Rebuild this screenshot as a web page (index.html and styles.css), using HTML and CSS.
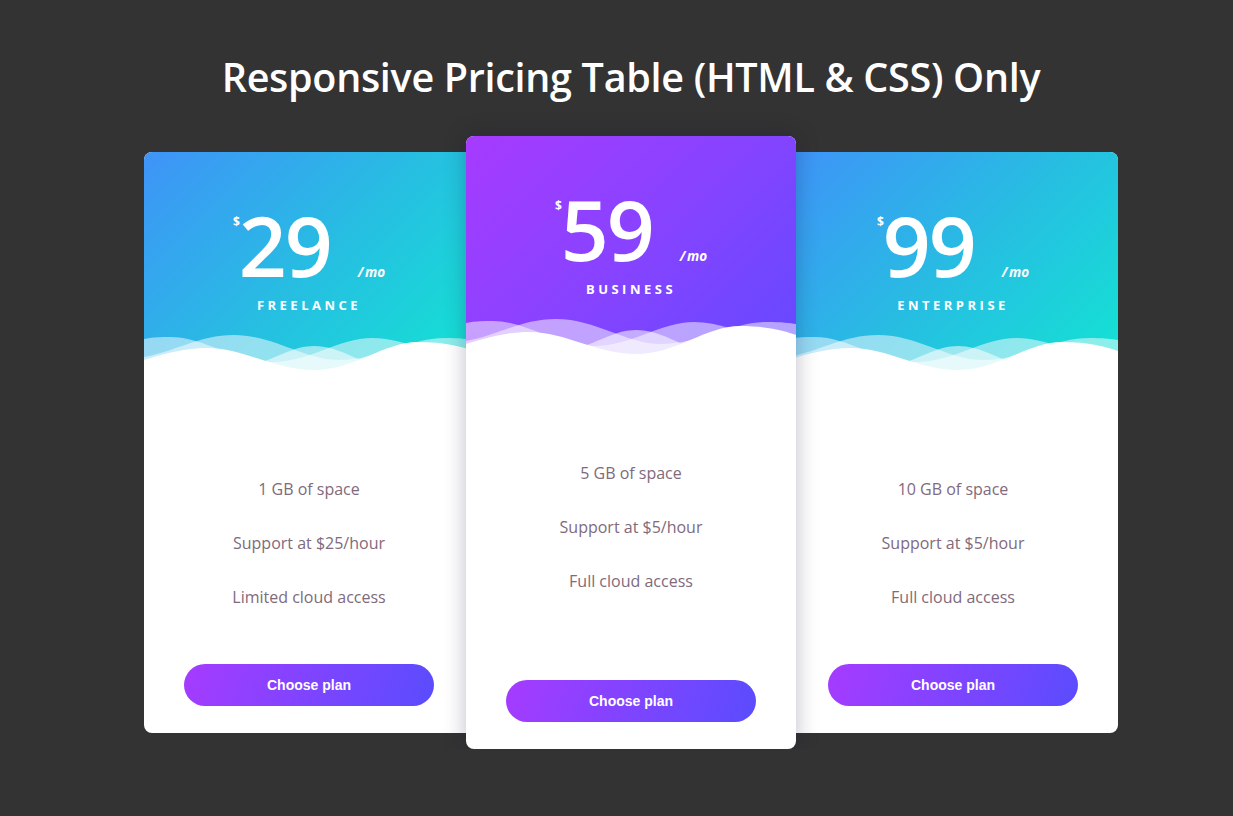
FILE: index.html
```html
<!DOCTYPE html>
<html lang="en">
<head>
<meta charset="utf-8">
<title>Responsive Pricing Table</title>
<link rel="stylesheet" href="styles.css">
</head>
<body>
<main class="page">
  <h1 class="title">Responsive Pricing Table (HTML &amp; CSS) Only</h1>
  <section class="plans">
    <article class="card card--side">
      <header class="card-head">
        <div class="price">
          <span class="currency">$</span>
          <span class="amount">29</span>
          <span class="period">/ mo</span>
        </div>
        <div class="plan-name">FREELANCE</div>
        <svg class="waves" viewBox="0 0 330 55" preserveAspectRatio="none" aria-hidden="true">
          <path fill="#fff" fill-opacity="0.5" d="M0 12 C10 10 18 10 27 10 C60 10 90 35 128 35 C165 35 195 11 228 11 C265 11 300 35 330 35 L330 55 L0 55 Z"/>
          <path fill="#fff" fill-opacity="0.5" d="M0 30 C30 25 55 8 90 8 C130 8 160 33 195 33 C235 33 265 11 301 11 C315 11 325 12 330 13 L330 55 L0 55 Z"/>
          <path fill="#fff" fill-opacity="0.55" d="M0 42 C40 46 80 46 110 38 C135 30 150 19 170 19 C195 19 215 35 240 42 C270 48 300 42 330 38 L330 55 L0 55 Z"/>
          <path fill="#fff" d="M0 33 C20 27 40 21 63 21 C100 21 130 43 170 43 C210 43 240 15 274 15 C300 15 320 20 330 24 L330 55 L0 55 Z"/>
        </svg>
      </header>
      <ul class="features">
        <li>1 GB of space</li>
        <li>Support at $25/hour</li>
        <li>Limited cloud access</li>
      </ul>
      <button class="choose" type="button">Choose plan</button>
    </article>

    <article class="card card--featured">
      <header class="card-head">
        <div class="price">
          <span class="currency">$</span>
          <span class="amount">59</span>
          <span class="period">/ mo</span>
        </div>
        <div class="plan-name">BUSINESS</div>
        <svg class="waves" viewBox="0 0 330 55" preserveAspectRatio="none" aria-hidden="true">
          <path fill="#fff" fill-opacity="0.5" d="M0 12 C10 10 18 10 27 10 C60 10 90 35 128 35 C165 35 195 11 228 11 C265 11 300 35 330 35 L330 55 L0 55 Z"/>
          <path fill="#fff" fill-opacity="0.5" d="M0 30 C30 25 55 8 90 8 C130 8 160 33 195 33 C235 33 265 11 301 11 C315 11 325 12 330 13 L330 55 L0 55 Z"/>
          <path fill="#fff" fill-opacity="0.55" d="M0 42 C40 46 80 46 110 38 C135 30 150 19 170 19 C195 19 215 35 240 42 C270 48 300 42 330 38 L330 55 L0 55 Z"/>
          <path fill="#fff" d="M0 33 C20 27 40 21 63 21 C100 21 130 43 170 43 C210 43 240 15 274 15 C300 15 320 20 330 24 L330 55 L0 55 Z"/>
        </svg>
      </header>
      <ul class="features">
        <li>5 GB of space</li>
        <li>Support at $5/hour</li>
        <li>Full cloud access</li>
      </ul>
      <button class="choose" type="button">Choose plan</button>
    </article>

    <article class="card card--side">
      <header class="card-head">
        <div class="price">
          <span class="currency">$</span>
          <span class="amount">99</span>
          <span class="period">/ mo</span>
        </div>
        <div class="plan-name">ENTERPRISE</div>
        <svg class="waves" viewBox="0 0 330 55" preserveAspectRatio="none" aria-hidden="true">
          <path fill="#fff" fill-opacity="0.5" d="M0 12 C10 10 18 10 27 10 C60 10 90 35 128 35 C165 35 195 11 228 11 C265 11 300 35 330 35 L330 55 L0 55 Z"/>
          <path fill="#fff" fill-opacity="0.5" d="M0 30 C30 25 55 8 90 8 C130 8 160 33 195 33 C235 33 265 11 301 11 C315 11 325 12 330 13 L330 55 L0 55 Z"/>
          <path fill="#fff" fill-opacity="0.55" d="M0 42 C40 46 80 46 110 38 C135 30 150 19 170 19 C195 19 215 35 240 42 C270 48 300 42 330 38 L330 55 L0 55 Z"/>
          <path fill="#fff" d="M0 33 C20 27 40 21 63 21 C100 21 130 43 170 43 C210 43 240 15 274 15 C300 15 320 20 330 24 L330 55 L0 55 Z"/>
        </svg>
      </header>
      <ul class="features">
        <li>10 GB of space</li>
        <li>Support at $5/hour</li>
        <li>Full cloud access</li>
      </ul>
      <button class="choose" type="button">Choose plan</button>
    </article>
  </section>
</main>
</body>
</html>
```
FILE: styles.css
```css
* { box-sizing: border-box; }

html, body {
  margin: 0;
  padding: 0;
}

body {
  background: #333333;
  font-family: "Open Sans", "Noto Sans", sans-serif;
  color: #fff;
}

.page {
  padding: 52px 0 0 29px;
  display: flex;
  flex-direction: column;
  align-items: center;
}

.title {
  margin: 0;
  font-size: 39.5px;
  line-height: 50px;
  font-weight: 600;
  color: #fff;
  letter-spacing: -0.3px;
}

.plans {
  margin-top: 34px;
  display: flex;
  align-items: center;
}

.card {
  width: 330px;
  background: #fff;
  border-radius: 8px;
  overflow: hidden;
  display: flex;
  flex-direction: column;
  align-items: center;
  padding-bottom: 27px;
}

.card--side:first-child { margin-right: -8px; }
.card--side:last-child { margin-left: -8px; }

.card--featured {
  position: relative;
  z-index: 1;
  box-shadow: 0 0 22px rgba(20, 20, 60, 0.28);
}

.card-head {
  position: relative;
  width: 100%;
  height: 230px;
  padding-top: 51px;
  display: flex;
  flex-direction: column;
  align-items: center;
  background: linear-gradient(135deg, #3f93f8 0%, #27bde2 50%, #12e5d2 100%);
}

.card--featured .card-head {
  background: linear-gradient(135deg, #a63bff 0%, #8743ff 50%, #6349ff 100%);
}

.price {
  display: flex;
  align-items: baseline;
  color: #fff;
}

.currency {
  align-self: flex-start;
  margin-top: 13px;
  margin-right: -1px;
  font-size: 12px;
  line-height: 12px;
  font-weight: 700;
}

.amount {
  font-size: 84px;
  line-height: 84px;
  font-weight: 600;
  letter-spacing: -2px;
}

.period {
  margin-left: 27px;
  font-size: 13.5px;
  line-height: 16px;
  font-weight: 700;
  font-style: italic;
  word-spacing: -2px;
}

.plan-name {
  margin-top: 10px;
  font-size: 13px;
  line-height: 16px;
  font-weight: 700;
  letter-spacing: 3.5px;
  padding-left: 0;
}

.waves {
  position: absolute;
  left: 0;
  bottom: 0;
  width: 100%;
  height: 55px;
  display: block;
}

.features {
  list-style: none;
  margin: 0;
  padding: 80px 0 0;
  text-align: center;
  color: #806a7c;
  font-size: 16px;
  line-height: 54px;
}

.features li { margin: 0; }

.choose {
  margin-top: 40px;
  width: 250px;
  height: 42px;
  border: 0;
  border-radius: 21px;
  background: linear-gradient(110deg, #a63bff 0%, #7f44ff 50%, #5a4cfe 100%);
  color: #fff;
  font-family: "Liberation Sans", Arial, sans-serif;
  font-size: 14px;
  font-weight: 700;
  cursor: pointer;
}

.card--featured .choose { margin-top: 72px; }
```
